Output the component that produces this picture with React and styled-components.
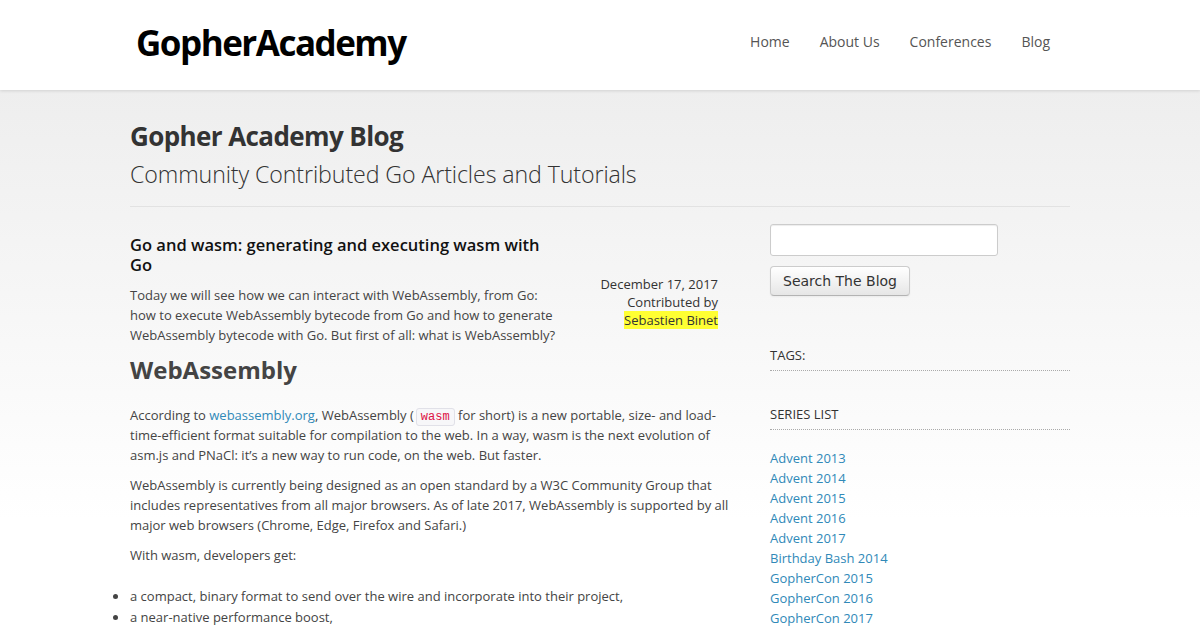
import styled, { createGlobalStyle } from 'styled-components'

const GlobalStyle = createGlobalStyle`
  html, body {
    margin: 0;
    padding: 0;
  }
  body {
    font-family: 'Open Sans', 'Liberation Sans', sans-serif;
    font-size: 13px;
    line-height: 20px;
    color: #333;
    background: linear-gradient(to bottom, #eeeeee 90px, #ffffff 520px);
    min-height: 630px;
    overflow: hidden;
  }
`

const series = [
  'Advent 2013',
  'Advent 2014',
  'Advent 2015',
  'Advent 2016',
  'Advent 2017',
  'Birthday Bash 2014',
  'GopherCon 2015',
  'GopherCon 2016',
  'GopherCon 2017'
]

const navItems = ['Home', 'About Us', 'Conferences', 'Blog']

export default function App () {
  return (
    <>
      <GlobalStyle />
      <TopBar>
        <TopInner>
          <Logo>GopherAcademy</Logo>
          <Nav>
            {navItems.map(item => (
              <NavLink key={item}>{item}</NavLink>
            ))}
          </Nav>
        </TopInner>
      </TopBar>
      <Page>
        <PageHeader>
          <BlogTitle>Gopher Academy Blog</BlogTitle>
          <BlogSub>Community Contributed Go Articles and Tutorials</BlogSub>
        </PageHeader>
        <Columns>
          <Main>
            <PostHead>
              <PostIntro>
                <PostTitle>Go and wasm: generating and executing wasm with Go</PostTitle>
                <Para>
                  Today we will see how we can interact with WebAssembly, from Go:
                  how to execute WebAssembly bytecode from Go and how to generate
                  WebAssembly bytecode with Go. But first of all: what is WebAssembly?
                </Para>
              </PostIntro>
              <Meta>
                <span>December 17, 2017</span>
                <span>Contributed by</span>
                <Author>Sebastien Binet</Author>
              </Meta>
            </PostHead>
            <Section>WebAssembly</Section>
            <Para>
              According to <Link>webassembly.org</Link>, WebAssembly (<Code>wasm</Code> for short)
              is a new portable, size- and load-time-efficient format suitable for compilation to
              the web. In a way, wasm is the next evolution of asm.js and PNaCl: it’s a new way to
              run code, on the web. But faster.
            </Para>
            <Para>
              WebAssembly is currently being designed as an open standard by a W3C Community Group
              that includes representatives from all major browsers. As of late 2017, WebAssembly is
              supported by all major web browsers (Chrome, Edge, Firefox and Safari.)
            </Para>
            <Para>With wasm, developers get:</Para>
            <List>
              <li>a compact, binary format to send over the wire and incorporate into their project,</li>
              <li>a near-native performance boost,</li>
              <li>performant and safe code executed inside the browser sand-boxed environment,</li>
            </List>
          </Main>
          <Side>
            <SearchInput type='text' />
            <SearchButton>Search The Blog</SearchButton>
            <WidgetTitle $top={49}>TAGS:</WidgetTitle>
            <WidgetTitle $top={33}>SERIES LIST</WidgetTitle>
            <SeriesList>
              {series.map(s => (
                <li key={s}><Link>{s}</Link></li>
              ))}
            </SeriesList>
          </Side>
        </Columns>
      </Page>
    </>
  )
}

const TopBar = styled.div`
  background: #fff;
  height: 90px;
  box-shadow: 0 1px 3px rgba(0, 0, 0, 0.12);
  position: relative;
`

const TopInner = styled.div`
  width: 940px;
  margin: 0 auto;
  height: 100%;
  display: flex;
  align-items: center;
  justify-content: space-between;
`

const Logo = styled.div`
  font-family: 'Open Sans', sans-serif;
  font-weight: 700;
  font-size: 35px;
  letter-spacing: -1.5px;
  color: #000;
  margin-left: 6px;
  margin-top: -4px;
`

const Nav = styled.nav`
  display: flex;
  gap: 30px;
  margin-right: 20px;
  margin-top: -6px;
`

const NavLink = styled.a`
  font-size: 14px;
  color: #555;
  cursor: pointer;
`

const Page = styled.div`
  width: 940px;
  margin: 0 auto;
`

const PageHeader = styled.div`
  padding-top: 28px;
  padding-bottom: 12px;
  border-bottom: 1px solid #e2e2e2;
`

const BlogTitle = styled.h1`
  margin: 0;
  font-size: 26px;
  line-height: 36px;
  font-weight: 700;
  letter-spacing: -0.6px;
  color: #333;
`

const BlogSub = styled.div`
  font-size: 23.2px;
  font-weight: 300;
  line-height: 40px;
  letter-spacing: -0.1px;
  color: #333;
`

const Columns = styled.div`
  display: flex;
  gap: 40px;
  padding-top: 17px;
`

const Main = styled.div`
  width: 600px;
`

const PostHead = styled.div`
  display: flex;
  justify-content: space-between;
`

const PostIntro = styled.div`
  width: 430px;
`

const PostTitle = styled.h3`
  margin: 11px 0 10px;
  font-size: 16.5px;
  line-height: 20px;
  font-weight: 600;
  color: #111;
`

const Meta = styled.div`
  display: flex;
  flex-direction: column;
  align-items: flex-end;
  padding-top: 51px;
  color: #333;
  line-height: 18px;
  margin-right: 12px;
`

const Author = styled.span`
  background: #ffff33;
`

const Section = styled.h2`
  margin: 0 0 20px;
  font-size: 24px;
  line-height: 30px;
  font-weight: 700;
  color: #444;
`

const Para = styled.p`
  margin: 0 0 10px;
  color: #444;
`

const Link = styled.a`
  color: #3089b8;
  cursor: pointer;
`

const Code = styled.code`
  font-family: 'Liberation Mono', monospace;
  font-size: 12px;
  line-height: 16px;
  color: #dd1144;
  background: #f7f7f9;
  border: 1px solid #e1e1e8;
  border-radius: 3px;
  padding: 1px 4px;
  margin-left: 2px;
`

const List = styled.ul`
  margin: 20px 0 0;
  padding: 0;
  color: #444;

  li {
    list-style: disc outside;
    padding-left: 0;
  }

  li::marker {
    font-size: 15px;
  }
`

const Side = styled.div`
  width: 300px;
  display: flex;
  flex-direction: column;
  align-items: flex-start;
`

const SearchInput = styled.input`
  box-sizing: border-box;
  width: 228px;
  height: 32px;
  margin: 0;
  border: 1px solid #ccc;
  border-radius: 3px;
  background: #fff;
  box-shadow: inset 0 1px 1px rgba(0, 0, 0, 0.075);
`

const SearchButton = styled.button`
  margin-top: 10px;
  height: 30px;
  padding: 0 12px;
  font-family: 'DejaVu Sans', sans-serif;
  font-size: 14px;
  color: #333;
  background: linear-gradient(to bottom, #ffffff, #e6e6e6);
  border: 1px solid #ccc;
  border-bottom-color: #b3b3b3;
  border-radius: 4px;
  box-shadow: inset 0 1px 0 rgba(255, 255, 255, 0.2), 0 1px 2px rgba(0, 0, 0, 0.05);
`

const WidgetTitle = styled.div`
  align-self: stretch;
  margin-top: ${({ $top }) => $top}px;
  padding-bottom: 5px;
  border-bottom: 1px dotted #aaa;
  font-size: 13px;
  color: #333;
  text-transform: uppercase;
`

const SeriesList = styled.ul`
  margin: 18px 0 0;
  padding: 0;
  list-style: none;
`
